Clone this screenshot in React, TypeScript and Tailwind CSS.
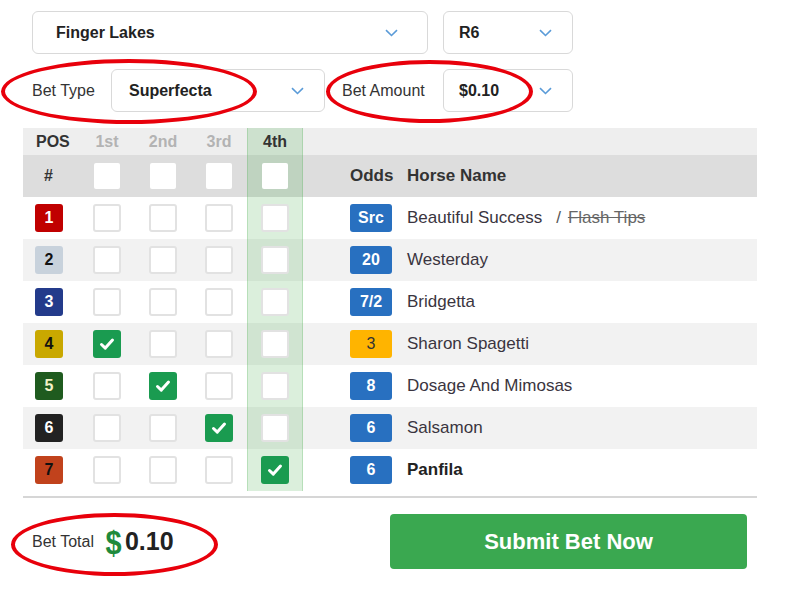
import React from 'react';

type Horse = {
  num: number;
  badge: string;
  odds: string;
  oddsClass: string;
  name: string;
  scratch?: string;
  bold?: boolean;
  checked: number | null;
};

const horses: Horse[] = [
  { num: 1, badge: 'bg-[#c00000] text-white', odds: 'Src', oddsClass: 'bg-[#2870c0] text-white', name: 'Beautiful Success', scratch: 'Flash Tips', checked: null },
  { num: 2, badge: 'bg-[#c8d2dc] text-[#111]', odds: '20', oddsClass: 'bg-[#2870c0] text-white', name: 'Westerday', checked: null },
  { num: 3, badge: 'bg-[#233b8b] text-white', odds: '7/2', oddsClass: 'bg-[#2870c0] text-white', name: 'Bridgetta', checked: null },
  { num: 4, badge: 'bg-[#c9a800] text-[#111]', odds: '3', oddsClass: 'bg-[#ffb400] text-[#333] font-normal', name: 'Sharon Spagetti', checked: 0 },
  { num: 5, badge: 'bg-[#1f5b1f] text-[#f4f2c8]', odds: '8', oddsClass: 'bg-[#2870c0] text-white', name: 'Dosage And Mimosas', checked: 1 },
  { num: 6, badge: 'bg-[#222] text-white', odds: '6', oddsClass: 'bg-[#2870c0] text-white', name: 'Salsamon', checked: 2 },
  { num: 7, badge: 'bg-[#c1421c] text-[#111]', odds: '6', oddsClass: 'bg-[#2870c0] text-white', name: 'Panfila', bold: true, checked: 3 },
];

function Chevron() {
  return (
    <svg width="13" height="8" viewBox="0 0 13 8" fill="none">
      <path d="M1 1.2l5.5 5.3L12 1.2" stroke="#5a9bd8" strokeWidth="1.6" />
    </svg>
  );
}

function Select({ value, className, padL, padR }: { value: string; className: string; padL: string; padR: string }) {
  return (
    <div
      className={`flex h-[43px] items-center justify-between rounded-[6px] border border-[#d9d9d9] bg-white text-[16px] font-bold text-[#222] ${className} ${padL} ${padR}`}
    >
      <span>{value}</span>
      <Chevron />
    </div>
  );
}

function Check({ checked, head }: { checked?: boolean; head?: boolean }) {
  if (checked) {
    return (
      <div className="flex h-[28px] w-[28px] items-center justify-center rounded-[3px] bg-[#1a9b50]">
        <svg width="16" height="14" viewBox="0 0 16 14" fill="none">
          <path d="M2.5 7.5l3.8 3.6L13.5 3" stroke="white" strokeWidth="3" strokeLinecap="round" strokeLinejoin="round" />
        </svg>
      </div>
    );
  }
  if (head) return <div className="h-[26px] w-[26px] rounded-[2px] bg-white" />;
  return <div className="h-[28px] w-[28px] rounded-[3px] border-2 border-[#e2e2e2] bg-white" />;
}

function Ellipse({ className }: { className: string }) {
  return <div className={`pointer-events-none absolute rounded-[50%] border-[4px] border-[#e8000b] ${className}`} />;
}

export default function App() {
  return (
    <div className="relative h-[596px] w-[792px] overflow-hidden bg-white font-['Liberation_Sans',Arial,sans-serif] text-[#333]">
      {/* selects */}
      <div className="flex gap-[15px] pl-[32px] pt-[11px]">
        <Select value="Finger Lakes" className="w-[396px]" padL="pl-[23px]" padR="pr-[29px]" />
        <Select value="R6" className="w-[130px]" padL="pl-[15px]" padR="pr-[20px]" />
      </div>
      <div className="mt-[15px] flex items-center pl-[32px]">
        <span className="w-[79px] text-[16px]">Bet Type</span>
        <Select value="Superfecta" className="w-[214px]" padL="pl-[17px]" padR="pr-[20px]" />
        <span className="ml-[17px] w-[101px] text-[16px]">Bet Amount</span>
        <Select value="$0.10" className="w-[130px]" padL="pl-[15px]" padR="pr-[20px]" />
      </div>

      {/* table */}
      <div className="ml-[23px] mt-[16px] w-[734px]">
        <div className="flex h-[27px] items-stretch bg-[#eeeeee] text-[16px] font-bold">
          <div className="flex w-[56px] items-center pl-[13px] text-[#333]">POS</div>
          {['1st', '2nd', '3rd'].map((p) => (
            <div key={p} className="flex w-[56px] items-center justify-center text-[#b3b3b3]">
              {p}
            </div>
          ))}
          <div className="flex w-[56px] items-center justify-center border-x border-[#4caf50]/25 bg-[#4caf50]/20 text-[#333]">4th</div>
        </div>
        <div className="flex h-[42px] items-stretch bg-[#dddddd] text-[17px] font-bold">
          <div className="flex w-[56px] items-center pl-[21px] text-[16px]">#</div>
          {[0, 1, 2].map((i) => (
            <div key={i} className="flex w-[56px] items-center justify-center">
              <Check head />
            </div>
          ))}
          <div className="flex w-[56px] items-center justify-center border-x border-[#4caf50]/25 bg-[#4caf50]/20">
            <Check head />
          </div>
          <div className="w-[47px]" />
          <div className="flex w-[56px] items-center">Odds</div>
          <div className="flex items-center pl-[1px]">Horse Name</div>
        </div>
        {horses.map((h, r) => (
          <div key={h.num} className={`flex h-[42px] items-stretch ${r % 2 === 1 ? 'bg-[#f2f2f2]' : 'bg-white'}`}>
            <div className="flex w-[56px] items-center pl-[12px]">
              <div className={`flex h-[28px] w-[28px] items-center justify-center rounded-[3px] text-[16px] font-bold ${h.badge}`}>
                {h.num}
              </div>
            </div>
            {[0, 1, 2].map((i) => (
              <div key={i} className="flex w-[56px] items-center justify-center">
                <Check checked={h.checked === i} />
              </div>
            ))}
            <div className="flex w-[56px] items-center justify-center border-x border-[#4caf50]/25 bg-[#4caf50]/20">
              <Check checked={h.checked === 3} />
            </div>
            <div className="w-[47px]" />
            <div className="flex w-[56px] items-center">
              <div className={`flex h-[28px] w-[42px] items-center justify-center rounded-[3px] text-[16px] font-bold ${h.oddsClass}`}>
                {h.odds}
              </div>
            </div>
            <div className={`flex items-center pl-[1px] text-[17px] ${h.bold ? 'font-bold text-[#222]' : 'text-[#3a3540]'}`}>
              {h.name}
              {h.scratch && (
                <>
                  <span className="ml-[14px] mr-[7px] text-[#555]">/</span>
                  <span className="text-[#666] line-through">{h.scratch}</span>
                </>
              )}
            </div>
          </div>
        ))}
        <div className="mt-[5px] h-[2px] bg-[#d6d6d6]" />
      </div>

      {/* footer */}
      <div className="mt-[16px] flex items-center pl-[32px]">
        <div className="flex w-[358px] items-center">
          <span className="text-[16px] text-[#333]">Bet Total</span>
          <span className="ml-[10px] scale-x-[0.85] text-[34px] font-bold leading-none text-[#1e8a3c]">$</span>
          <span className="ml-[2px] text-[25px] font-bold leading-none text-[#222]">0.10</span>
        </div>
        <button className="flex h-[55px] w-[357px] items-center justify-center rounded-[4px] bg-[#3aa850] text-[22px] font-bold text-white">
          Submit Bet Now
        </button>
      </div>

      <Ellipse className="left-[1px] top-[59px] h-[65px] w-[256px]" />
      <Ellipse className="left-[326px] top-[60px] h-[63px] w-[207px]" />
      <Ellipse className="left-[11px] top-[513px] h-[63px] w-[207px]" />
    </div>
  );
}
